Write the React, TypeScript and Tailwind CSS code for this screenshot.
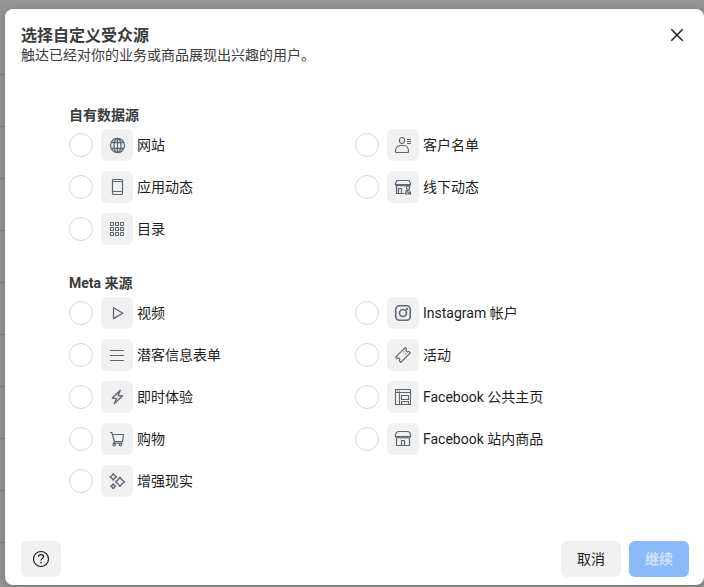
import type { ReactNode } from "react";

type Source = { label: string; icon: ReactNode };

const svg = (children: ReactNode, width = 1.1) => (
  <svg
    width="16"
    height="16"
    viewBox="0 0 16 16"
    fill="none"
    stroke="currentColor"
    strokeWidth={width}
    strokeLinejoin="round"
    className="overflow-visible"
  >
    {children}
  </svg>
);

const globe = svg(
  <>
    <circle cx="8.5" cy="8.5" r="7" />
    <ellipse cx="8.5" cy="8.5" rx="3.5" ry="7" />
    <path d="M8.5 1.5v14M2.5 5.5h12M2.5 11.5h12" />
  </>,
  1.3
);

const phone = svg(
  <>
    <rect x="3.5" y=".5" width="10" height="15" rx="1" />
    <path d="M3.5 2.5h10M3.5 12.5h10" />
  </>,
  1.2
);

const grid = svg(
  <>
    {[1.5, 6.5, 11.5].map((y) =>
      [1.5, 6.5, 11.5].map((x) => (
        <rect key={`${x}-${y}`} x={x} y={y} width="3" height="3" rx=".4" />
      ))
    )}
  </>
);

const customer = svg(
  <>
    <ellipse cx="7" cy="3.5" rx="2.6" ry="3" />
    <path d="M1.5 15.5h11c.6 0 1-.4 1-1 0-3.3-1.7-6-4.5-6h-4C2.2 8.5.5 11.2.5 14.5c0 .6.4 1 1 1z" />
    <path d="M12 2.5h4M12 4.500h4M12 6.500h4" strokeWidth="1" />
  </>,
  1.2
);

const offline = svg(
  <>
    <path d="M2 1.500h12l1.500 3v1H.5v-1z" />
    <path d="M.5 5.500a1.880 1.400 0 0 0 3.750 0a1.880 1.400 0 0 0 3.750 0a1.880 1.400 0 0 0 3.750 0a1.880 1.400 0 0 0 3.750 0" />
    <path d="M1.500 7v7.500h8M3.500 14.500v-5h3v5" />
    <circle cx="13" cy="8.800" r="1.700" />
    <path d="M10.500 15c0-2 1-3.500 2.500-3.500s2.500 1.500 2.500 3.500zM10.500 11.500l2 1.500 2.500 1.500" />
  </>,
  1.2
);

const video = svg(<path d="M4.500 2.800v10.800L13.800 8.200z" />, 1.3);

const lines = svg(<path d="M1 3.500h14M1 8.500h14M1 13.500h14" />);

const bolt = svg(<path d="M11.300 1.300L3.300 9l4.200.6-2.200 5 8.200-7.600-4.400-.5z" />, 1.3);

const cart = svg(
  <>
    <path d="M1 1.500h1.800l2.700 9h8.200M3.500 3.500h11l-1 7" />
    <path d="M5.500 10.500l-1.200 1.700h9.200" />
    <circle cx="5.200" cy="13.800" r="1.200" />
    <circle cx="11.500" cy="13.800" r="1.200" />
  </>,
  1.2
);

const sparkles = svg(
  <>
    <path d="M4.200.7Q5.200 2.800 7.500 3.900 5.200 4.900 4.200 7.100 3.200 4.900 1 3.900 3.200 2.800 4.200.7z" />
    <path d="M11 4.300Q12.700 7.200 15.400 8.800 12.700 10.400 11 13.300 9.300 10.400 6.600 8.800 9.300 7.200 11 4.300z" />
    <path d="M4.200 10.700Q5 12.400 6.600 13.200 5 14 4.200 15.700 3.400 14 1.800 13.200 3.400 12.400 4.200 10.700z" />
  </>,
  1.4
);

const instagram = svg(
  <>
    <rect x=".75" y=".75" width="14.500" height="14.500" rx="3.800" />
    <circle cx="8" cy="8" r="3.500" />
    <circle cx="12" cy="4" r=".4" fill="currentColor" />
  </>,
  1.6
);

const ticket = svg(
  <>
    <path d="M10.200.6l1.300 1.300a1.600 1.600 0 0 0 2.400 2.400l1.500 1.500-9.600 9.600-1.500-1.500a1.600 1.600 0 0 0-2.400-2.400L.6 10.200z" />
    <path d="M8.400 4.600l.8.800M10.300 6.500l.8.800" />
  </>,
  1.2
);

const page = svg(
  <>
    <path d="M.5.500h15v15H.5zM.5 3.500h15M4.500 3.500v12M2 2h1M4 2h1" />
    <rect x="6.500" y="6.500" width="7" height="4" />
    <path d="M6.500 15.500v-3h7v3" />
  </>
);

const shop = svg(
  <>
    <path d="M3.500.5h9c1.500 0 3 2 3 3.500v1.500H.5V4c0-1.500 1.500-3.500 3-3.500z" />
    <path d="M.5 5.500a1.880 1.700 0 0 0 3.750 0a1.880 1.700 0 0 0 3.750 0a1.880 1.700 0 0 0 3.750 0a1.880 1.700 0 0 0 3.750 0" />
    <path d="M1.500 7.500v7h13v-7M6.500 14.500v-5h3v5" />
  </>,
  1.2
);

const groups: { title: string; columns: Source[][] }[] = [
  {
    title: "自有数据源",
    columns: [
      [
        { label: "网站", icon: globe },
        { label: "应用动态", icon: phone },
        { label: "目录", icon: grid },
      ],
      [
        { label: "客户名单", icon: customer },
        { label: "线下动态", icon: offline },
      ],
    ],
  },
  {
    title: "Meta 来源",
    columns: [
      [
        { label: "视频", icon: video },
        { label: "潜客信息表单", icon: lines },
        { label: "即时体验", icon: bolt },
        { label: "购物", icon: cart },
        { label: "增强现实", icon: sparkles },
      ],
      [
        { label: "Instagram 帐户", icon: instagram },
        { label: "活动", icon: ticket },
        { label: "Facebook 公共主页", icon: page },
        { label: "Facebook 站内商品", icon: shop },
      ],
    ],
  },
];

function Option({ source, name }: { source: Source; name: string }) {
  return (
    <label className="flex h-8 items-center text-sm text-[#1c1e21]">
      <input
        type="radio"
        name={name}
        className="size-6 shrink-0 appearance-none rounded-full border border-[#d4d4d4] bg-white checked:border-[7px] checked:border-[#0a78be]"
      />
      <span className="ml-2 flex size-8 shrink-0 items-center justify-center rounded-md bg-[#f1f1f1] text-[#5d6673]">
        {source.icon}
      </span>
      <span className="ml-1 whitespace-nowrap">{source.label}</span>
    </label>
  );
}

export default function App() {
  return (
    <div className="h-[587px] w-[704px] overflow-hidden bg-[#969696] bg-[repeating-linear-gradient(to_bottom,transparent_0,transparent_51px,#808080_51px,#808080_52px)] bg-[position:0_23px] bg-no-repeat pt-[9px] pl-[5px] font-[Roboto,'Noto_Sans_CJK_SC',sans-serif]">
      <div
        role="dialog"
        className="flex h-[576px] w-[699px] flex-col rounded-lg bg-white px-4 pt-[17px] pb-2 shadow-[0_2px_8px_rgba(0,0,0,0.25)]"
      >
        <header className="flex justify-between text-[#3a3b3d]">
          <div>
            <h1 className="text-base leading-5 font-bold">选择自定义受众源</h1>
            <p className="text-sm leading-[19px]">触达已经对你的业务或商品展现出兴趣的用户。</p>
          </div>
          <button aria-label="关闭" className="mr-1 flex h-[18px] w-3.5 items-center justify-center text-[#1c1e21]">
            <svg width="14" height="14" viewBox="0 0 14 14" stroke="currentColor" strokeWidth="1.5">
              <path d="M1.300 1.300l11.400 11.400M12.700 1.300L1.300 12.700" />
            </svg>
          </button>
        </header>

        <main className="flex flex-1 flex-col gap-7 px-12 pt-10">
          {groups.map((g) => (
            <section key={g.title}>
              <h2 className="mb-1 text-sm leading-5 font-bold text-[#3a3b3d]">{g.title}</h2>
              <div className="flex">
                {g.columns.map((col, i) => (
                  <div key={i} className="flex w-[286px] shrink-0 flex-col gap-2.5">
                    {col.map((s) => (
                      <Option key={s.label} source={s} name="source" />
                    ))}
                  </div>
                ))}
              </div>
            </section>
          ))}
        </main>

        <footer className="flex items-center gap-2 text-sm">
          <button
            aria-label="帮助"
            className="mr-auto flex h-9 w-10 items-center justify-center rounded-md bg-[#f1f1f1] text-[#1c1e21]"
          >
            <svg width="18" height="18" viewBox="0 0 18 18" fill="none" stroke="currentColor" strokeWidth="1.200">
              <circle cx="9" cy="9" r="7.500" />
              <path d="M6.500 6.800c0-1.300 1-2.200 2.500-2.200s2.500.9 2.500 2.100c0 1.700-2.500 1.700-2.500 3.800" />
              <circle cx="9" cy="12.600" r=".3" fill="currentColor" />
            </svg>
          </button>
          <button className="h-9 w-[60px] rounded-md bg-[#f1f1f1] text-[#1c1e21]">取消</button>
          <button disabled className="mr-[-1px] h-9 w-[60px] rounded-md bg-[#8bbafa] font-bold text-[#d0e3fd]">
            继续
          </button>
        </footer>
      </div>
    </div>
  );
}
